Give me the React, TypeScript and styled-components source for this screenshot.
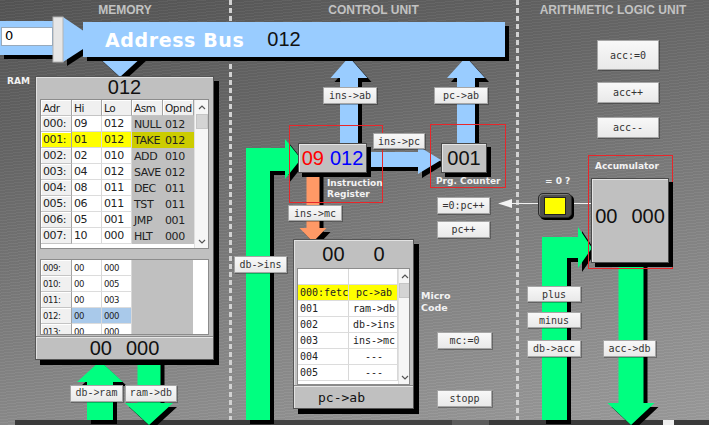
import React from 'react';
import styled, { createGlobalStyle, css } from 'styled-components';

const GlobalStyle = createGlobalStyle`
  html, body {
    margin: 0;
    padding: 0;
    background: #6a6a6a;
  }
  body {
    width: 709px;
    height: 425px;
    overflow: hidden;
    font-family: "DejaVu Sans", sans-serif;
  }
`;

type Pos = { $x: number; $y: number };
type Box = Pos & { $w: number; $h: number };

const at = css<Pos>`
    position: absolute;
    left: ${p => p.$x}px;
    top: ${p => p.$y}px;
`;

const sized = css<Box>`
    ${at};
    width: ${p => p.$w}px;
    height: ${p => p.$h}px;
    box-sizing: border-box;
`;

const Stage = styled.div`
    position: relative;
    width: 709px;
    height: 425px;
    overflow: hidden;
    display: flex;
    flex-direction: column;
    background:
        repeating-linear-gradient(174deg, rgba(255,255,255,0.035) 0 1px, rgba(0,0,0,0.03) 1px 3px),
        linear-gradient(168deg, #555 0%, #686868 28%, #808080 58%, #949494 85%, #9c9c9c 100%);
`;

const Columns = styled.div`
    flex: 1;
    display: grid;
    grid-template-columns: 230px 287px 1fr;
`;

const Column = styled.section<{ $divider?: boolean }>`
    position: relative;
    ${p =>
      p.$divider &&
      css`
        &::after {
            content: '';
            position: absolute;
            top: 0;
            right: -2px;
            width: 3px;
            height: 100%;
            background: repeating-linear-gradient(to bottom, #d2d2d2 0 5px, transparent 5px 8px);
        }
    `}
`;

const SectionTitle = styled.h2<{ $shift?: number }>`
    margin: 3px 0 0;
    padding-left: ${p => p.$shift ?? 0}px;
    text-align: center;
    font: bold 12px "Liberation Sans", Arial, sans-serif;
    color: #c2c2c2;
`;

const BottomBar = styled.div`
    height: 5px;
    margin-left: 15px;
    background: linear-gradient(to right,
        #3a3a3a 0 256px, #424242 256px 437px, #5c5c5c 437px 474px,
        #3a3a3a 474px 648px, #eeeeee 648px 659px, #3a3a3a 659px);
`;

const Canvas = styled.div`
    position: absolute;
    inset: 0;
`;

const WireLayer = styled.svg`
    position: absolute;
    left: 0;
    top: 0;
`;

/* ---------- bus ---------- */

const BusBar = styled.div<Box>`
    ${sized};
    background: #99ccff;
    box-shadow: 4px 4px 0 #000;
    display: flex;
    align-items: center;
    padding-left: 22px;
    gap: 23px;
`;

const BusTitle = styled.span`
    font: bold 19px "DejaVu Sans", Verdana, sans-serif;
    letter-spacing: 0.6px;
    color: #fff;
`;

const BigDigits = styled.span<{ $color?: string }>`
    font: 20px "Liberation Sans", Arial, sans-serif;
    color: ${p => p.$color ?? '#111'};
`;

const AddressInput = styled.div<Box>`
    ${sized};
    background: #fff;
    border: 1px solid #9ab;
    padding: 0 3px;
    font: 13px "DejaVu Sans", sans-serif;
    line-height: 16px;
    color: #000;
`;

/* ---------- panels ---------- */

const Panel = styled.div<Box>`
    ${sized};
    background: #c0c0c0;
    border: 1px solid #555;
    box-shadow: 5px 5px 0 #000, inset 1px 1px 0 #e2e2e2;
    display: flex;
    flex-direction: column;
`;

const PanelTitle = styled.div<{ $h: number }>`
    height: ${p => p.$h}px;
    display: flex;
    align-items: center;
    justify-content: center;
`;

const PanelFoot = styled.div<{ $h: number; $left?: number }>`
    height: ${p => p.$h}px;
    margin-top: auto;
    border-top: 1px solid #8a8a8a;
    box-shadow: inset 0 1px 0 #e6e6e6;
    display: flex;
    align-items: center;
    justify-content: ${p => (p.$left !== undefined ? 'flex-start' : 'center')};
    padding-left: ${p => p.$left ?? 0}px;
    gap: 14px;
`;

const FootText = styled.span`
    font: 13px "DejaVu Sans Mono", monospace;
    color: #111;
`;

const Frame = styled.div<{ $h: number; $mt: number; $mx: number }>`
    height: ${p => p.$h}px;
    margin: ${p => p.$mt}px ${p => p.$mx}px 0;
    background: #fff;
    border: 1px solid #8c8c8c;
    display: flex;
    overflow: hidden;
`;

const Grid = styled.div<{ $cols: string; $row: number }>`
    display: grid;
    grid-template-columns: ${p => p.$cols};
    grid-auto-rows: ${p => p.$row}px;
    align-content: start;
    flex: none;
`;

type CellKind = 'head' | 'key' | 'val' | 'asm' | 'blank';

const Cell = styled.div<{ $kind: CellKind; $hl?: 'yellow' | 'blue'; $size?: number; $mono?: boolean; $center?: boolean }>`
    box-sizing: border-box;
    padding-left: 2px;
    overflow: hidden;
    white-space: pre;
    display: flex;
    align-items: center;
    justify-content: ${p => (p.$center ? 'center' : 'flex-start')};
    font-size: ${p => p.$size ?? 11}px;
    font-family: ${p => (p.$mono ? '"DejaVu Sans Mono", monospace' : '"DejaVu Sans", Verdana, sans-serif')};
    letter-spacing: ${p => (p.$mono ? 0 : -0.4)}px;
    color: #222;
    ${p =>
      (p.$kind === 'head' || p.$kind === 'key') &&
      css`
        background: #f0f0f0;
        border-right: 1px solid #a4a4a4;
        border-bottom: 1px solid #c4c4c4;
        box-shadow: inset 1px 1px 0 #fff;
    `}
    ${p =>
      p.$kind === 'head' &&
      css`
        font-size: 10.5px;
    `}
    ${p =>
      p.$kind === 'val' &&
      css`
        background: #fff;
        border-right: 1px solid #d8d8d8;
        border-bottom: 1px solid #dcdcdc;
    `}
    ${p =>
      p.$kind === 'asm' &&
      css`
        background: #c0c0c0;
    `}
    ${p =>
      p.$kind === 'blank' &&
      css`
        background: #fff;
    `}
    ${p =>
      p.$hl === 'yellow' &&
      css`
        background: ${p.$kind === 'asm' ? '#cccc00' : '#ffff00'};
    `}
    ${p =>
      p.$hl === 'blue' &&
      css`
        background: #a9c9ea;
    `}
`;

const Scroll = styled.div<{ $w: number }>`
    width: ${p => p.$w}px;
    margin-left: auto;
    background: #f6f6f6;
    border-left: 1px solid #e0e0e0;
    display: flex;
    flex-direction: column;
    align-items: center;
    padding: 5px 0 4px;
    box-sizing: border-box;
`;

const Thumb = styled.div`
    width: 10px;
    height: 13px;
    margin-top: 4px;
    background: #d4d4d4;
    border: 1px solid #c6c6c6;
`;

const Chevron = ({ down }: { down?: boolean }) => (
    <svg width="8" height="5" viewBox="0 0 8 5" style={down ? { marginTop: 'auto' } : undefined}>
        <polyline
            points={down ? '1,1 4,4 7,1' : '1,4 4,1 7,4'}
            fill="none"
            stroke="#555"
            strokeWidth="1.2"
        />
    </svg>
);

/* ---------- registers, frames, labels, buttons ---------- */

const Register = styled.div<Box & { $pad?: number; $lift?: number }>`
    ${sized};
    background: #c0c0c0;
    border: 1px solid #4a4a4a;
    box-shadow: 4px 4px 0 #000, inset 1px 1px 0 #e4e4e4;
    display: flex;
    align-items: center;
    justify-content: center;
    gap: ${p => p.$pad ?? 6}px;
    padding-bottom: ${p => p.$lift ?? 0}px;
`;

const RedFrame = styled.div<Box>`
    ${sized};
    border: 1px solid #e8262a;
`;

const Caption = styled.div<Pos & { $size?: number }>`
    ${at};
    font: bold ${p => p.$size ?? 9}px "DejaVu Sans", Verdana, sans-serif;
    line-height: ${p => (p.$size ?? 9) + 2}px;
    color: #f2f2f2;
    white-space: pre;
`;

const CtlButton = styled.div<Box & { $font?: string }>`
    ${sized};
    background: linear-gradient(#f8f8f8, #e9e9e9);
    border: 1px solid #a6a6a6;
    box-shadow: 1px 1px 0 rgba(0, 0, 0, 0.28);
    display: flex;
    align-items: center;
    justify-content: center;
    font: 10px ${p => p.$font ?? '"DejaVu Sans Mono", monospace'};
    color: #333;
`;

const Indicator = styled.div<Box>`
    ${sized};
    background: #4f4f4f;
    border: 1px solid #2a2a2a;
    border-radius: 5px;
    box-shadow: 2px 2px 0 #000, inset 1px 1px 0 #7a7a7a;
    display: flex;
    align-items: center;
    justify-content: center;
`;

const Lamp = styled.div<{ $on: boolean }>`
    width: 20px;
    height: 16px;
    background: ${p => (p.$on ? '#ffff00' : '#666')};
    border: 1px solid #222;
`;

/* ---------- wires ---------- */

const up = (cx: number, sw: number, hw: number, tip: number, hh: number, bottom: number) =>
    `${cx - sw / 2},${bottom} ${cx - sw / 2},${tip + hh} ${cx - hw / 2},${tip + hh} ${cx},${tip} ` +
    `${cx + hw / 2},${tip + hh} ${cx + sw / 2},${tip + hh} ${cx + sw / 2},${bottom}`;

const down = (cx: number, sw: number, hw: number, top: number, tip: number, hh: number) =>
    `${cx - sw / 2},${top} ${cx + sw / 2},${top} ${cx + sw / 2},${tip - hh} ${cx + hw / 2},${tip - hh} ` +
    `${cx},${tip} ${cx - hw / 2},${tip - hh} ${cx - sw / 2},${tip - hh}`;

const BLUE = '#99ccff';
const GREEN = '#00ff80';
const ORANGE = '#ff9966';

const wires: { pts: string; fill: string }[] = [
    { pts: '0,21 56,21 56,55 0,55', fill: BLUE },
    { pts: '63,17 97,40 63,62', fill: BLUE },
    { pts: '97,56 143,56 120,77', fill: BLUE },
    { pts: up(349, 18, 37, 57, 21, 143), fill: BLUE },
    { pts: up(466, 18, 38, 57, 21, 143), fill: BLUE },
    { pts: '367,152 418,152 418,146 441,160 418,174 418,167 367,167', fill: BLUE },
    { pts: down(313, 13, 27, 173, 242, 14), fill: ORANGE },
    { pts: '246,420 246,148 285,148 285,139 301,159 285,179 285,171 270,171 270,420', fill: GREEN },
    { pts: up(100, 26, 46, 361, 21, 420), fill: GREEN },
    { pts: down(149, 23, 48, 358, 425, 22), fill: GREEN },
    { pts: '542,420 542,237 578,237 578,227 592,248 578,268 578,258 567,258 567,420', fill: GREEN },
    { pts: down(631, 25, 47, 263, 425, 22), fill: GREEN },
];

const Wires = () => (
    <WireLayer width="709" height="425" viewBox="0 0 709 425">
        <g transform="translate(4,4)">
            {wires.map((w, i) => (
                <polygon key={i} points={w.pts} fill="#000" />
            ))}
        </g>
        {wires.map((w, i) => (
            <polygon key={i} points={w.pts} fill={w.fill} />
        ))}
        <rect x="53" y="17" width="10" height="45" fill="#e6e6e6" stroke="#b4b4b4" />
        <line x1="510" y1="203.5" x2="539" y2="203.5" stroke="#f0f0f0" strokeWidth="1" />
        <line x1="572" y1="203.5" x2="592" y2="203.5" stroke="#f0f0f0" strokeWidth="1" />
        <polygon points="498,203.5 512,199 512,208" fill="#f4f4f4" />
    </WireLayer>
);

/* ---------- data ---------- */

const ramRows = [
    ['000:', '09', '012', 'NULL', '012'],
    ['001:', '01', '012', 'TAKE', '012'],
    ['002:', '02', '010', 'ADD', '010'],
    ['003:', '04', '012', 'SAVE', '012'],
    ['004:', '08', '011', 'DEC', '011'],
    ['005:', '06', '011', 'TST', '011'],
    ['006:', '05', '001', 'JMP', '001'],
    ['007:', '10', '000', 'HLT', '000'],
];

const ramTail = [
    ['009:', '00', '000'],
    ['010:', '00', '005'],
    ['011:', '00', '003'],
    ['012:', '00', '000'],
    ['013:', '00', '000'],
];

const microRows = [
    ['000:fetch', 'pc->ab'],
    ['001', 'ram->db'],
    ['002', 'db->ins'],
    ['003', 'ins->mc'],
    ['004', '---'],
    ['005', '---'],
];

const buttons: { label: string; x: number; y: number; w: number; h: number; font?: string }[] = [
    { label: 'db->ram', x: 70, y: 385, w: 53, h: 17, font: '"Liberation Mono", monospace' },
    { label: 'ram->db', x: 125, y: 385, w: 52, h: 17, font: '"Liberation Mono", monospace' },
    { label: 'ins->ab', x: 323, y: 87, w: 54, h: 17 },
    { label: 'pc->ab', x: 434, y: 87, w: 54, h: 17 },
    { label: 'ins->pc', x: 373, y: 133, w: 52, h: 16 },
    { label: 'ins->mc', x: 288, y: 205, w: 54, h: 16 },
    { label: '=0:pc++', x: 437, y: 197, w: 53, h: 17 },
    { label: 'pc++', x: 437, y: 221, w: 53, h: 17 },
    { label: 'db->ins', x: 234, y: 256, w: 53, h: 17 },
    { label: 'mc:=0', x: 437, y: 332, w: 55, h: 17 },
    { label: 'stopp', x: 437, y: 390, w: 55, h: 17 },
    { label: 'acc:=0', x: 597, y: 40, w: 62, h: 30 },
    { label: 'acc++', x: 597, y: 82, w: 62, h: 21 },
    { label: 'acc--', x: 597, y: 117, w: 62, h: 21 },
    { label: 'plus', x: 527, y: 286, w: 54, h: 16 },
    { label: 'minus', x: 527, y: 312, w: 54, h: 16 },
    { label: 'db->acc', x: 527, y: 340, w: 54, h: 17 },
    { label: 'acc->db', x: 603, y: 340, w: 53, h: 17 },
];

const App = () => {
    return (
        <>
            <GlobalStyle />
            <Stage>
                <Columns>
                    <Column $divider>
                        <SectionTitle $shift={20}>MEMORY</SectionTitle>
                    </Column>
                    <Column $divider>
                        <SectionTitle>CONTROL UNIT</SectionTitle>
                    </Column>
                    <Column>
                        <SectionTitle>ARITHMETIC LOGIC UNIT</SectionTitle>
                    </Column>
                </Columns>
                <BottomBar />

                <Canvas>
                    <Wires />

                    <AddressInput $x={1} $y={27} $w={52} $h={19}>0</AddressInput>
                    <BusBar $x={83} $y={22} $w={422} $h={35}>
                        <BusTitle>Address Bus</BusTitle>
                        <BigDigits>012</BigDigits>
                    </BusBar>

                    {/* RAM */}
                    <Caption $x={7} $y={76}>RAM</Caption>
                    <Panel $x={35} $y={76} $w={179} $h={284}>
                        <PanelTitle $h={21}>
                            <BigDigits>012</BigDigits>
                        </PanelTitle>
                        <Frame $h={148} $mt={1} $mx={4}>
                            <Grid $cols="31px 30px 30px 31px 31px" $row={16}>
                                {['Adr', 'Hi', 'Lo', 'Asm', 'Opnd'].map(h => (
                                    <Cell key={h} $kind="head">{h}</Cell>
                                ))}
                                {ramRows.map((r, i) => {
                                    const hl = i === 1 ? 'yellow' : undefined;
                                    return (
                                        <React.Fragment key={r[0]}>
                                            <Cell $kind="key" $hl={hl}>{r[0]}</Cell>
                                            <Cell $kind="val" $hl={hl}>{r[1]}</Cell>
                                            <Cell $kind="val" $hl={hl}>{r[2]}</Cell>
                                            <Cell $kind="asm" $hl={hl}>{r[3]}</Cell>
                                            <Cell $kind="asm" $hl={hl}>{r[4]}</Cell>
                                        </React.Fragment>
                                    );
                                })}
                            </Grid>
                            <Scroll $w={14}>
                                <Chevron />
                                <Thumb />
                                <Chevron down />
                            </Scroll>
                        </Frame>
                        <Frame $h={74} $mt={10} $mx={4}>
                            <Grid $cols="31px 30px 30px 61px 16px" $row={16}>
                                {ramTail.map((r, i) => {
                                    const hl = i === 3 ? 'blue' : undefined;
                                    return (
                                        <React.Fragment key={r[0]}>
                                            <Cell $kind="key" $size={8.5}>{r[0]}</Cell>
                                            <Cell $kind="val" $hl={hl} $size={8.5}>{r[1]}</Cell>
                                            <Cell $kind="val" $hl={hl} $size={8.5}>{r[2]}</Cell>
                                            <Cell $kind="asm" />
                                            <Cell $kind="blank" />
                                        </React.Fragment>
                                    );
                                })}
                            </Grid>
                        </Frame>
                        <PanelFoot $h={22}>
                            <BigDigits>00</BigDigits>
                            <BigDigits>000</BigDigits>
                        </PanelFoot>
                    </Panel>

                    {/* control unit */}
                    <RedFrame $x={289} $y={125} $w={94} $h={78} />
                    <Register $x={298} $y={143} $w={69} $h={30}>
                        <BigDigits $color="#ff0000">09</BigDigits>
                        <BigDigits $color="#0000ff">012</BigDigits>
                    </Register>
                    <Caption $x={327} $y={178}>{'Instruction\nRegister'}</Caption>

                    <RedFrame $x={430} $y={124} $w={76} $h={64} />
                    <Register $x={441} $y={143} $w={46} $h={30}>
                        <BigDigits>001</BigDigits>
                    </Register>
                    <Caption $x={436} $y={176}>Prg. Counter</Caption>

                    <Panel $x={293} $y={239} $w={121} $h={170}>
                        <PanelTitle $h={28}>
                            <BigDigits>00</BigDigits>
                            <BigDigits style={{ marginLeft: 29 }}>0</BigDigits>
                        </PanelTitle>
                        <Frame $h={115} $mt={0} $mx={3}>
                            <Grid $cols="51px 49px" $row={16}>
                                <Cell $kind="val" />
                                <Cell $kind="val" />
                                {microRows.map((r, i) => {
                                    const hl = i === 0 ? 'yellow' : undefined;
                                    return (
                                        <React.Fragment key={r[0]}>
                                            <Cell $kind="val" $hl={hl} $mono $size={10}>{r[0]}</Cell>
                                            <Cell $kind="val" $hl={hl} $mono $size={10} $center>{r[1]}</Cell>
                                        </React.Fragment>
                                    );
                                })}
                            </Grid>
                            <Scroll $w={13}>
                                <Chevron />
                                <Thumb />
                                <Chevron down />
                            </Scroll>
                        </Frame>
                        <PanelFoot $h={22} $left={24}>
                            <FootText>pc-&gt;ab</FootText>
                        </PanelFoot>
                    </Panel>
                    <Caption $x={421} $y={290} $size={9.5}>{'Micro\nCode'}</Caption>

                    {/* alu */}
                    <RedFrame $x={588} $y={155} $w={85} $h={114} />
                    <Caption $x={595} $y={161}>Accumulator</Caption>
                    <Register $x={591} $y={178} $w={78} $h={85} $pad={14} $lift={8}>
                        <BigDigits>00</BigDigits>
                        <BigDigits>000</BigDigits>
                    </Register>
                    <Caption $x={545} $y={176}>= 0 ?</Caption>
                    <Indicator $x={538} $y={193} $w={34} $h={25}>
                        <Lamp $on />
                    </Indicator>

                    {buttons.map(b => (
                        <CtlButton key={b.label} $x={b.x} $y={b.y} $w={b.w} $h={b.h} $font={b.font}>
                            {b.label}
                        </CtlButton>
                    ))}
                </Canvas>
            </Stage>
        </>
    );
};

export default App;
